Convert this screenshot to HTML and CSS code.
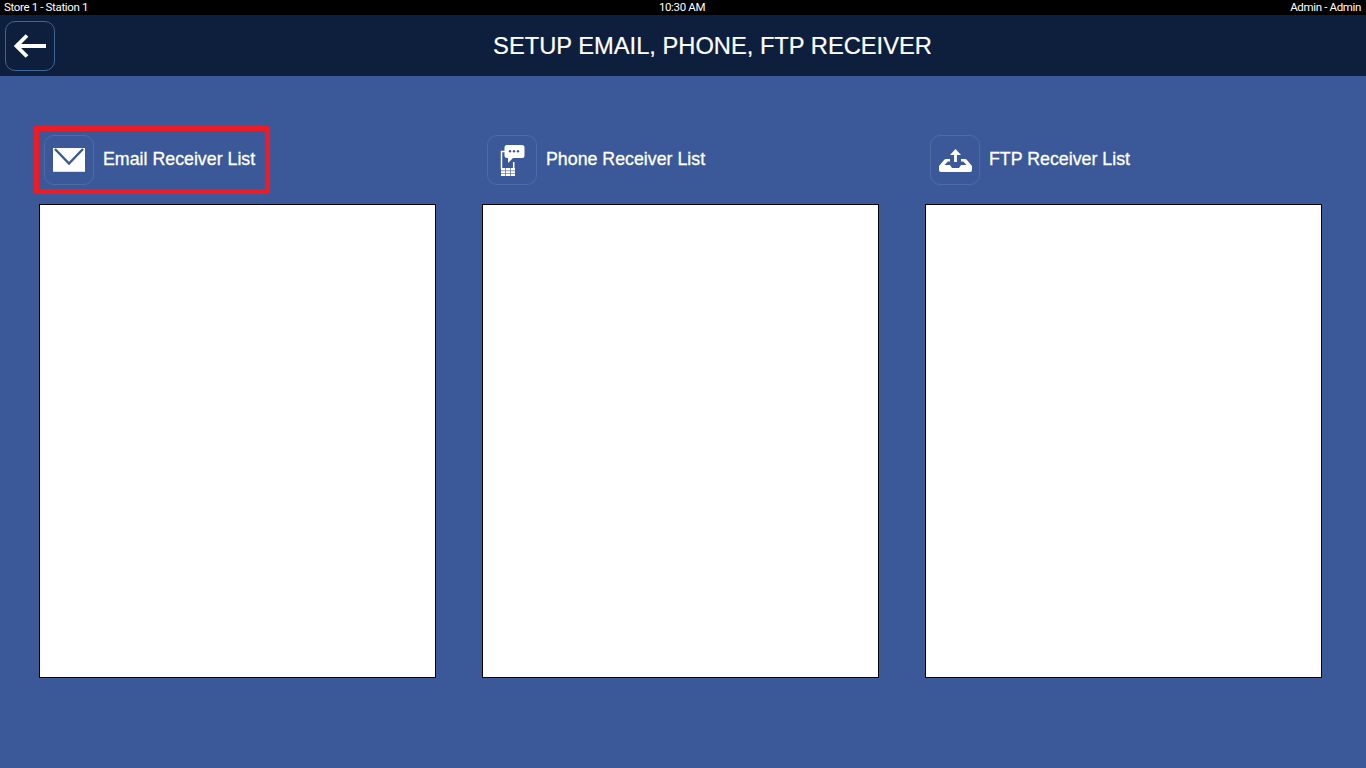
FILE: index.html
```html
<!DOCTYPE html>
<html lang="en">
<head>
<meta charset="utf-8">
<title>Setup Email, Phone, FTP Receiver</title>
<link rel="stylesheet" href="styles.css">
</head>
<body>
<div class="status">
  <span class="status-left">Store 1 - Station 1</span>
  <span class="status-mid">10:30 AM</span>
  <span class="status-right">Admin - Admin</span>
</div>
<header class="head">
  <button class="tile back" aria-label="Back">
    <svg width="32" height="24" viewBox="0 0 32 24"><path d="M13 1.500 2.500 12 13 22.500M3 12H32" fill="none" stroke="#fff" stroke-width="3.800"/></svg>
  </button>
  <h1 class="title">SETUP EMAIL, PHONE, FTP RECEIVER</h1>
</header>
<main class="columns">
  <section class="col">
    <div class="label selected">
      <span class="tile">
        <svg width="32" height="24" viewBox="0 0 32 24"><path d="M0 0H32V24H0Z" fill="#fff"/><path d="M0 23H32V24H0Z" fill="#d5dbe8"/><path d="M2 1 16 15.500 30 1" fill="none" stroke="#3b5998" stroke-width="2.400"/></svg>
      </span>
      <span class="label-text">Email Receiver List</span>
    </div>
    <div class="list"></div>
  </section>
  <section class="col">
    <div class="label">
      <span class="tile">
        <svg width="25" height="32" viewBox="0 0 25 32"><path d="M5 7.500H1.500V25M13.700 18V25" fill="none" stroke="#fff" stroke-width="1.500"/><path d="M1 24H15V32H1Z" fill="#fff"/><path d="M1 26.800H15M1 29.500H15M5.500 24V32M10.500 24V32" stroke="#3b5998" stroke-width="0.600"/><path d="M7 1H22Q24.500 1 24.500 3.500V11.500Q24.500 14 22 14H13L8 19V14H7Q4.500 14 4.500 11.500V3.500Q4.500 1 7 1Z" fill="#fff"/><circle cx="10" cy="7.300" r="1.200" fill="#3b5998"/><circle cx="14" cy="7.300" r="1.200" fill="#3b5998"/><circle cx="18" cy="7.300" r="1.200" fill="#3b5998"/></svg>
      </span>
      <span class="label-text">Phone Receiver List</span>
    </div>
    <div class="list"></div>
  </section>
  <section class="col">
    <div class="label">
      <span class="tile">
        <svg width="33" height="23" viewBox="0 0 33 23"><path d="M16.500 4V13" stroke="#fff" stroke-width="2.800" fill="none"/><path d="M16.500 0 22 6H11Z" fill="#fff"/><path d="M7 10H11V12.500H8.800L5.500 16H11L13 19H20L22 16H27.500L24.200 12.500H22V10H26Q27 10 27.500 10.500L33 17V21Q33 23 31 23H2Q0 23 0 21V17L5.500 10.500Q6 10 7 10Z" fill="#fff"/></svg>
      </span>
      <span class="label-text">FTP Receiver List</span>
    </div>
    <div class="list"></div>
  </section>
</main>
</body>
</html>
```
FILE: styles.css
```css
*, *::after { box-sizing: border-box; }
html, body { margin: 0; height: 100%; }
body {
  width: 1366px;
  height: 768px;
  overflow: hidden;
  background: #3b5998;
  color: #fff;
  font-family: "Liberation Sans", Arial, sans-serif;
}
.status {
  height: 15px;
  background: #000;
  display: grid;
  grid-template-columns: 1fr auto 1fr;
  padding: 0 5px 0 4px;
  font-family: Roboto, sans-serif;
  font-size: 11.5px;
  letter-spacing: -0.35px;
  line-height: 14px;
  color: #fff;
}
.status-mid { padding-right: 1px; }
.status-right { text-align: right; }
.head {
  height: 61px;
  background: #0d1f3c;
  position: relative;
  display: flex;
  align-items: center;
  justify-content: center;
  padding-left: 59px;
}
.title {
  margin: 0;
  font-size: 23.7px;
  font-weight: 400;
  line-height: 26px;
  -webkit-text-stroke: 0.2px #fff;
}
.tile {
  width: 50px;
  height: 50px;
  flex: none;
  display: flex;
  align-items: center;
  justify-content: center;
  border: 1px solid #4f6ba5;
  border-radius: 10px;
  background: transparent;
  padding: 0;
}
.back {
  position: absolute;
  left: 5px;
  top: 6px;
  border-color: #3f6596;
}
.columns {
  display: flex;
  gap: 46px;
  padding: 59px 0 0 39px;
}
.col { width: 397px; }
.label {
  display: flex;
  align-items: center;
  gap: 9px;
  height: 50px;
  margin-left: 5px;
  position: relative;
  margin-bottom: 19px;
}
.selected::after {
  content: "";
  position: absolute;
  left: -10px;
  top: -9px;
  width: 236px;
  height: 68px;
  border: 5px solid #ed1c24;
}
.label-text {
  font-size: 17.8px;
  font-weight: 400;
  line-height: 20px;
  padding-bottom: 2px;
  -webkit-text-stroke: 0.3px #fff;
}
.list {
  height: 474px;
  background: #fff;
  border: 1px solid #000;
}
```
